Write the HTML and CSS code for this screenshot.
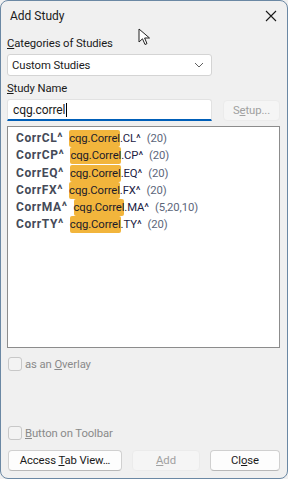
FILE: index.html
```html
<!DOCTYPE html>
<html lang="en">
<head>
  <meta charset="UTF-8">
  <title>Add Study</title>
  <link rel="stylesheet" href="styles.css">
</head>
<body>
  <div class="dialog">
    <div class="titlebar">
      <span class="title">Add Study</span>
      <svg class="close" width="12" height="12" viewBox="0 0 12 12">
        <path d="M1 1 L11 11 M11 1 L1 11" stroke="#1a1a1a" stroke-width="1.1" fill="none"/>
      </svg>
    </div>

    <div class="content">
      <div class="label"><u>C</u>ategories of Studies</div>
      <div class="select">
        <span>Custom Studies</span>
        <svg width="10" height="6" viewBox="0 0 10 6"><path d="M1 1 L5 5 L9 1" stroke="#606060" stroke-width="1" fill="none"/></svg>
      </div>

      <div class="label second"><u>S</u>tudy Name</div>
      <div class="name-row">
        <div class="input"><span>cqg.correl</span><span class="caret"></span></div>
        <div class="btn setup disabled"><span>S<u>e</u>tup...</span></div>
      </div>

      <div class="list">
        <div class="item"><b>CorrCL^</b><span class="hl">cqg.Correl</span>.CL^<span class="args">(20)</span></div>
        <div class="item"><b>CorrCP^</b><span class="hl">cqg.Correl</span>.CP^<span class="args">(20)</span></div>
        <div class="item"><b>CorrEQ^</b><span class="hl">cqg.Correl</span>.EQ^<span class="args">(20)</span></div>
        <div class="item"><b>CorrFX^</b><span class="hl">cqg.Correl</span>.FX^<span class="args">(20)</span></div>
        <div class="item"><b>CorrMA^</b><span class="hl">cqg.Correl</span>.MA^<span class="args">(5,20,10)</span></div>
        <div class="item"><b>CorrTY^</b><span class="hl">cqg.Correl</span>.TY^<span class="args">(20)</span></div>
      </div>

      <div class="check overlay"><span class="box"></span><span>as an <u>O</u>verlay</span></div>
      <div class="spacer"></div>
      <div class="check"><span class="box"></span><span><u>B</u>utton on Toolbar</span></div>

      <div class="buttons">
        <div class="btn access"><span>Access <u>T</u>ab View…</span></div>
        <div class="btn add disabled"><span><u>A</u>dd</span></div>
        <div class="btn close-btn"><span>Cl<u>o</u>se</span></div>
      </div>
    </div>

    <svg class="pointer" width="14" height="18" viewBox="0 0 14 18">
      <path d="M1 1 L1 14 L4.5 10.8 L7 16.5 L9 15.6 L6.6 10 L11.5 10 Z" fill="#fff" stroke="#222" stroke-width="1" stroke-linejoin="round"/>
    </svg>
  </div>
</body>
</html>
```

FILE: styles.css
```css
html, body {
  margin: 0;
  padding: 0;
}
body {
  font-family: Roboto, 'Noto Sans', sans-serif;
  font-size: 11.3px;
  letter-spacing: -0.1px;
  color: #1a1a1a;
  background: #f0f0f0;
}
.dialog {
  position: relative;
  width: 288px;
  height: 479px;
  box-sizing: border-box;
  border: 1px solid #6b88a4;
  border-radius: 8px;
  background: #f0f0f0;
  display: flex;
  flex-direction: column;
  overflow: hidden;
}
.titlebar {
  height: 29px;
  flex: none;
  display: flex;
  align-items: center;
  justify-content: space-between;
  padding: 0 9px 0 9px;
  font-size: 12px;
  letter-spacing: 0;
}
.close {
  margin-right: 1px;
}
.content {
  flex: 1;
  display: flex;
  flex-direction: column;
  padding: 0 7px 7px 6px;
}
.label {
  height: 16px;
  line-height: 16px;
  margin-top: 6px;
}
.label.second {
  margin-top: 5px;
}
.select {
  margin-top: 2px;
  width: 205px;
  height: 22px;
  box-sizing: border-box;
  background: #fff;
  border: 1px solid #d4d4d4;
  border-radius: 3px;
  display: flex;
  align-items: center;
  justify-content: space-between;
  padding: 0 7px 0 4px;
}
.name-row {
  margin-top: 2px;
  display: flex;
  align-items: flex-start;
  justify-content: space-between;
}
.input {
  width: 205px;
  height: 22px;
  box-sizing: border-box;
  background: #fff;
  border: 1px solid #e2e2e2;
  border-bottom: 2px solid #005fb8;
  border-radius: 3px 3px 0 0;
  padding: 0 5px;
  display: flex;
  align-items: center;
  font-size: 12px;
}
.caret {
  display: inline-block;
  width: 1px;
  height: 14px;
  background: #000;
  margin-left: 1px;
}
.btn {
  height: 21px;
  box-sizing: border-box;
  border: 1px solid #d0d0d0;
  border-bottom-color: #b8b8b8;
  border-radius: 4px;
  background: #fdfdfd;
  display: flex;
  align-items: center;
  justify-content: center;
}
.btn.disabled {
  color: #a0a0a0;
  background: #f5f5f5;
  border-color: #ebebeb;
}
.setup {
  width: 57px;
  margin-top: 1px;
}
.list {
  margin-top: 5px;
  height: 222px;
  box-sizing: border-box;
  background: #fff;
  border: 1px solid #8c8c8c;
  padding: 3px 0 0 8px;
}
.item {
  height: 17.3px;
  line-height: 17.3px;
  white-space: nowrap;
  color: #1c2244;
}
.item b {
  font-size: 12px;
  letter-spacing: 0.6px;
  color: #454a58;
  margin-right: 6px;
}
.hl {
  background: #f2b53c;
  border-radius: 2px;
  color: #1a1a2a;
  padding: 2px 0;
}
.args {
  color: #5c667a;
  margin-left: 6px;
}
.check {
  height: 16px;
  display: flex;
  align-items: center;
  color: #8a8a8a;
}
.check.overlay {
  margin-top: 8px;
}
.box {
  width: 12px;
  height: 12px;
  border: 1px solid #c8c8c8;
  border-radius: 3px;
  background: #f3f3f3;
  margin: 0 3px 0 1px;
}
.spacer {
  flex: 1;
}
.buttons {
  margin-top: 9px;
  display: flex;
  justify-content: space-between;
  padding-left: 1px;
}
.access {
  width: 114px;
}
.add {
  width: 68px;
}
.close-btn {
  width: 70px;
}
.pointer {
  position: absolute;
  left: 137px;
  top: 27px;
}
```
